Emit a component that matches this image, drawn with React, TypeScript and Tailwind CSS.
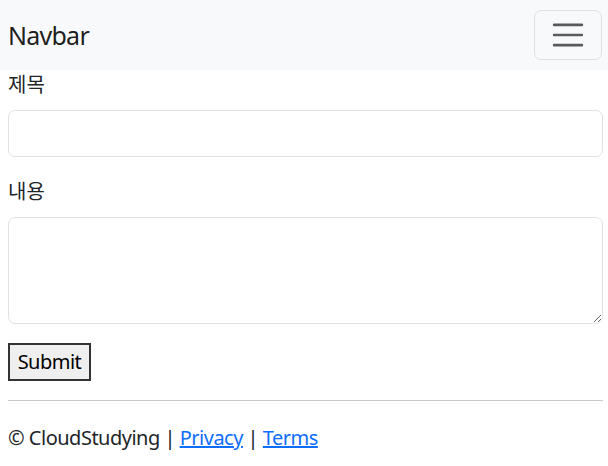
export default function App() {
  return (
    <div className="min-h-screen bg-white text-[#212529] text-[20px] leading-[30px] tracking-[-0.025em] [font-family:'Noto_Sans','Noto_Sans_CJK_KR',sans-serif]">
      <nav className="h-[70px] bg-[#f8f9fa] flex items-center justify-between pl-[8px] pr-[6px]">
        <a className="text-[25px] leading-[37px] text-[#000000e6] tracking-[-0.03em]">Navbar</a>
        <button className="w-[68px] h-[50px] border border-[#0000001a] rounded-[7px] flex items-center justify-center">
          <svg width="38" height="38" viewBox="0 0 30 30">
            <path d="M4 7h22M4 15h22M4 23h22" stroke="rgba(33,37,41,0.75)" strokeWidth="2" strokeLinecap="round" />
          </svg>
        </button>
      </nav>
      <div className="pl-[8px] pr-[5px]">
        <form onSubmit={(e) => e.preventDefault()}>
          <div className="mb-[20px]">
            <label className="block mb-[10px] tracking-normal">제목</label>
            <input className="block w-full h-[47px] border border-[#dee2e6] rounded-[7px] px-[15px] outline-none" />
          </div>
          <div className="mb-[19px]">
            <label className="block mb-[10px] tracking-normal">내용</label>
            <textarea rows={3} className="block w-full h-[107px] border border-[#dee2e6] rounded-[7px] px-[15px] py-[7px] outline-none" />
          </div>
          <button className="h-[38px] w-[83px] border-2 border-[#333] bg-[#efefef] text-black flex items-center justify-center">
            Submit
          </button>
        </form>
        <hr className="mt-[19px] border-t border-[#c8c9ca]" />
        <footer className="mt-[22px]">
          © CloudStudying | <a href="#" className="text-[#0d6efd] underline">Privacy</a> | <a href="#" className="text-[#0d6efd] underline">Terms</a>
        </footer>
      </div>
    </div>
  );
}
